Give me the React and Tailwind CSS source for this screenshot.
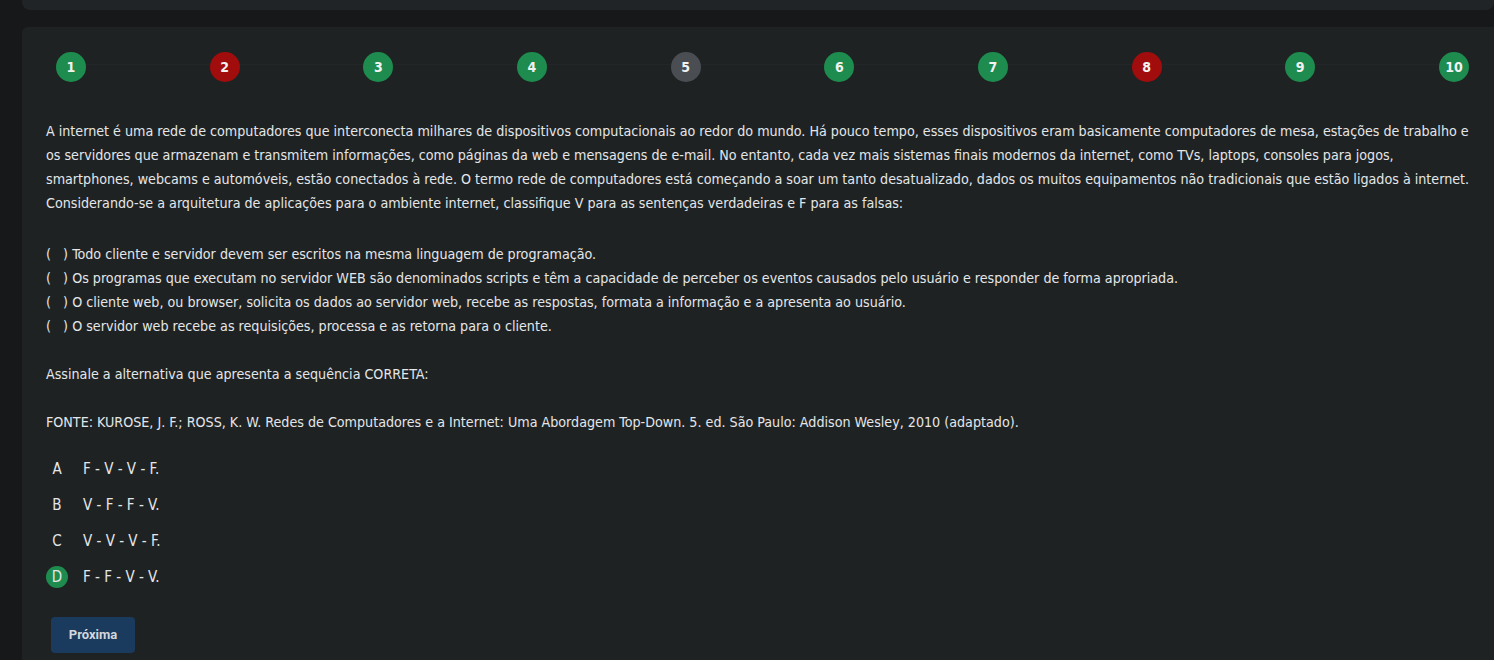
const steps = [
  { n: 1, c: 'bg-[#1e8c4e]' },
  { n: 2, c: 'bg-[#a10d0d]' },
  { n: 3, c: 'bg-[#1e8c4e]' },
  { n: 4, c: 'bg-[#1e8c4e]' },
  { n: 5, c: 'bg-[#4a4e53]' },
  { n: 6, c: 'bg-[#1e8c4e]' },
  { n: 7, c: 'bg-[#1e8c4e]' },
  { n: 8, c: 'bg-[#a10d0d]' },
  { n: 9, c: 'bg-[#1e8c4e]' },
  { n: 10, c: 'bg-[#1e8c4e]' },
]

const intro = [
  'A internet é uma rede de computadores que interconecta milhares de dispositivos computacionais ao redor do mundo. Há pouco tempo, esses dispositivos eram basicamente computadores de mesa, estações de trabalho e',
  'os servidores que armazenam e transmitem informações, como páginas da web e mensagens de e-mail. No entanto, cada vez mais sistemas finais modernos da internet, como TVs, laptops, consoles para jogos,',
  'smartphones, webcams e automóveis, estão conectados à rede. O termo rede de computadores está começando a soar um tanto desatualizado, dados os muitos equipamentos não tradicionais que estão ligados à internet.',
  'Considerando-se a arquitetura de aplicações para o ambiente internet, classifique V para as sentenças verdadeiras e F para as falsas:',
]

const statements = [
  'Todo cliente e servidor devem ser escritos na mesma linguagem de programação.',
  'Os programas que executam no servidor WEB são denominados scripts e têm a capacidade de perceber os eventos causados pelo usuário e responder de forma apropriada.',
  'O cliente web, ou browser, solicita os dados ao servidor web, recebe as respostas, formata a informação e a apresenta ao usuário.',
  'O servidor web recebe as requisições, processa e as retorna para o cliente.',
]

const options = [
  { l: 'A', t: 'F - V - V - F.' },
  { l: 'B', t: 'V - F - F - V.' },
  { l: 'C', t: 'V - V - V - F.' },
  { l: 'D', t: 'F - F - V - V.', picked: true },
]

const font = { fontFamily: '"DejaVu Sans Condensed", "DejaVu Sans", sans-serif' }

export default function App() {
  return (
    <div className="w-[1494px] h-[660px] overflow-hidden bg-[#17181a] pl-[22px]" style={font}>
      <div className="h-[10px] bg-[#212427] rounded-b-lg" />
      <div className="mt-[17px] bg-[#1f2223] rounded-tl-md h-[700px] pl-[34px] pr-[25px] pt-[25px] text-[#e4e6e8]">
        {/* stepper */}
        <div className="relative flex justify-between items-center">
          <div className="absolute left-0 right-0 top-[12px] h-px bg-[#222628]" />
          {steps.map((s) => (
            <div
              key={s.n}
              className={`relative w-[30px] h-[30px] rounded-full flex items-center justify-center text-[14px] font-bold text-[#f2f2f2] ${s.c}`}
            >
              {s.n}
            </div>
          ))}
        </div>

        <div className="mt-[37px] -ml-[10px] text-[14.17px] leading-[24px] whitespace-nowrap">
          <div>
            {intro.map((line, i) => (
              <div key={i}>{line}</div>
            ))}
          </div>
          <div className="mt-[27px]">
            {statements.map((line, i) => (
              <div key={i}>
                {'(\u00a0\u00a0\u00a0) '}
                {line}
              </div>
            ))}
          </div>
          <p className="mt-[24px]">Assinale a alternativa que apresenta a sequência CORRETA:</p>
          <p className="mt-[24px]">
            FONTE: KUROSE, J. F.; ROSS, K. W. Redes de Computadores e a Internet: Uma Abordagem Top-Down. 5. ed. São Paulo: Addison Wesley, 2010 (adaptado).
          </p>

          <div className="mt-[23px] flex flex-col gap-[12px]">
            {options.map((o) => (
              <div key={o.l} className="flex items-center gap-[15px]">
                <span
                  className={`w-[22px] h-[22px] rounded-full flex items-center justify-center text-[15px] ${o.picked ? 'bg-[#1e8c4e]' : ''}`}
                >
                  {o.l}
                </span>
                <span className="text-[15px]">{o.t}</span>
              </div>
            ))}
          </div>

          <button
            className="mt-[28px] ml-[5px] w-[84px] h-[36px] rounded bg-[#1a3a5e] text-[#d3d7db] text-[13px] font-bold"
            style={{ fontFamily: 'Roboto, "Liberation Sans", sans-serif' }}
          >
            Próxima
          </button>
        </div>
      </div>
    </div>
  )
}
